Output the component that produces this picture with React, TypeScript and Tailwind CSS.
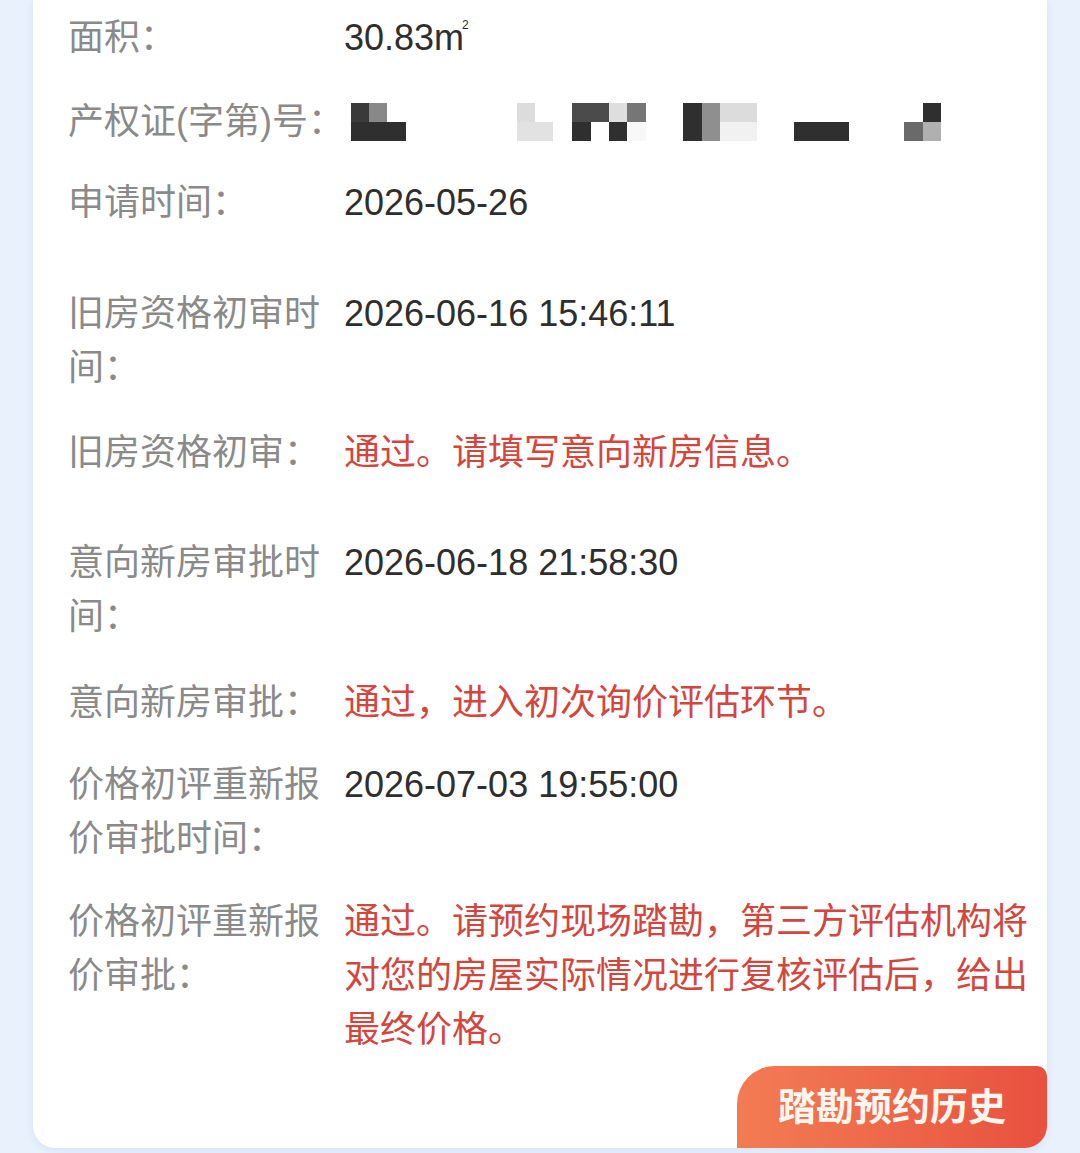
import React from "react";

const FONT = {
  fontFamily: '"Liberation Sans", "Noto Sans CJK SC", sans-serif',
};

function Row({
  label,
  children,
  mt,
  nowrap,
}: {
  label: string;
  children: React.ReactNode;
  mt: string;
  nowrap?: boolean;
}) {
  return (
    <div className={`flex ${mt}`}>
      <div
        className={`w-[276px] shrink-0 text-[#8a8a8a] ${nowrap ? "whitespace-nowrap" : ""}`}
      >
        {label}
      </div>
      <div className="flex-1 min-w-0 text-[#2e2e2e]">{children}</div>
    </div>
  );
}

function Mosaic() {
  const dark = "#2f2f2f";
  const cells: [number, number, number, number, string][] = [
    // block A
    [0, 0, 18, 19, "#3a3a3a"],
    [18, 0, 18, 19, "#888888"],
    [0, 19, 55, 19, dark],
    // block B
    [166, 0, 18, 19, "#dcdcdc"],
    [166, 19, 36, 19, "#e2e2e2"],
    // block C
    [221, 0, 37, 19, "#4b4b4b"],
    [258, 0, 18, 19, "#dedede"],
    [276, 0, 19, 19, "#767676"],
    [221, 19, 19, 19, dark],
    [258, 19, 18, 19, dark],
    [276, 19, 19, 19, "#f8f8f8"],
    // block D
    [332, 0, 19, 38, dark],
    [351, 0, 18, 38, "#8f8f8f"],
    [369, 0, 37, 19, "#dcdcdc"],
    [369, 19, 37, 19, "#f1f1f1"],
    // block E
    [443, 19, 55, 19, dark],
    // block F
    [572, 0, 18, 19, dark],
    [553, 19, 19, 19, "#6a6a6a"],
    [572, 19, 18, 19, "#b0b0b0"],
  ];
  return (
    <svg width="600" height="38" viewBox="0 0 600 38" className="block">
      {cells.map(([x, y, w, h, c], i) => (
        <rect key={i} x={x} y={y} width={w} height={h} fill={c} />
      ))}
    </svg>
  );
}

export default function App() {
  return (
    <div
      className="min-h-[1153px] bg-[#e9f2fc] px-[33px] pb-[5px] text-[36px] leading-[54px]"
      style={FONT}
    >
      <div className="bg-white rounded-b-[22px] pt-[11px] pl-[35px] pr-[12px] shadow-[0_2px_8px_rgba(150,180,220,0.25)]">
        <Row label="面积：" mt="mt-0">
          <span>
            30.83m
            <sup className="text-[12px] -top-[21px] -ml-[2px]">2</sup>
          </span>
        </Row>
        <Row label="产权证(字第)号：" mt="mt-[30px]" nowrap>
          <div className="h-[54px] flex items-center pl-[7px]">
            <Mosaic />
          </div>
        </Row>
        <Row label="申请时间：" mt="mt-[27px]">
          2026-05-26
        </Row>
        <Row label="旧房资格初审时间：" mt="mt-[57px]">
          2026-06-16 15:46:11
        </Row>
        <Row label="旧房资格初审：" mt="mt-[31px]">
          <span className="text-[#d4463d]">通过。请填写意向新房信息。</span>
        </Row>
        <Row label="意向新房审批时间：" mt="mt-[56px]">
          2026-06-18 21:58:30
        </Row>
        <Row label="意向新房审批：" mt="mt-[32px]">
          <span className="text-[#d4463d]">通过，进入初次询价评估环节。</span>
        </Row>
        <Row label="价格初评重新报价审批时间：" mt="mt-[28px]">
          2026-07-03 19:55:00
        </Row>
        <Row label="价格初评重新报价审批：" mt="mt-[29px]">
          <span className="text-[#d4463d]">
            通过。请预约现场踏勘，第三方评估机构将对您的房屋实际情况进行复核评估后，给出最终价格。
          </span>
        </Row>
        <div className="flex justify-end mt-[9px] -mr-[12px]">
          <div className="w-[310px] h-[82px] flex items-center justify-center rounded-tl-[38px] rounded-tr-[10px] rounded-br-[22px] bg-gradient-to-r from-[#f27c54] to-[#e8503f] text-[#fff6ee] font-bold text-[38px]">
            踏勘预约历史
          </div>
        </div>
      </div>
    </div>
  );
}
